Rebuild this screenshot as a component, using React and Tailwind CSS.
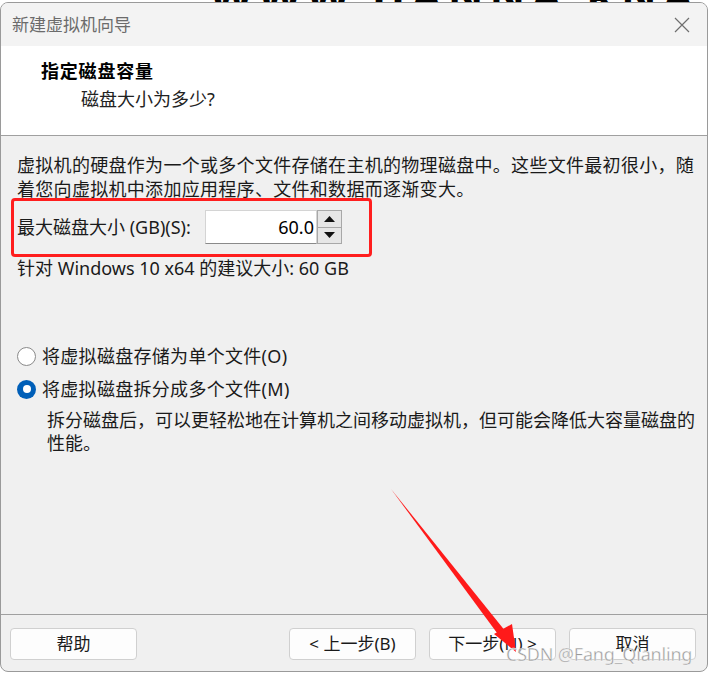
import React from 'react';

const cjk = { fontFamily: '"Noto Sans", "Noto Sans CJK SC", sans-serif' };

function Radio({ checked }) {
  if (checked) {
    return (
      <span className="flex h-[19px] w-[19px] items-center justify-center rounded-full bg-[#005fb8]">
        <span className="h-[8px] w-[8px] rounded-full bg-white" />
      </span>
    );
  }
  return <span className="h-[19px] w-[19px] rounded-full border border-[#8a8a8a] bg-white" />;
}

function Button({ children }) {
  return (
    <button className="flex h-[32px] w-[127px] items-center justify-center rounded-[4px] border border-[#d0d0d0] bg-[#fdfdfd] text-[17px] text-[#1a1a1a]">
      {children}
    </button>
  );
}

export default function App() {
  return (
    <div className="relative h-[673px] w-[711px] overflow-hidden bg-white" style={cjk}>
      {/* page behind the dialog */}
      <div className="absolute left-[210px] top-[-37px] whitespace-nowrap text-[44px] font-bold tracking-[6px] text-black">
        WWW.ПANNA.RNA <span className="text-[#7b3fc4]">♪</span>
      </div>

      <div className="relative mt-[2px] flex h-[670px] w-[708px] flex-col overflow-hidden rounded-[8px] border border-[#9a9a9a] bg-[#f0f0f0]">
        {/* title bar */}
        <div className="flex h-[43px] items-center justify-between bg-[#f3f3f3] pl-[11px] pr-[14px]">
          <span className="text-[17px] text-[#6b6b6b]">新建虚拟机向导</span>
          <svg width="18" height="18" viewBox="0 0 18 18" className="mr-[2px]">
            <path d="M2 2 L16 16 M16 2 L2 16" stroke="#6e6e6e" strokeWidth="1.2" />
          </svg>
        </div>

        {/* header */}
        <div className="h-[90px] border-b border-[#a0a0a0] bg-white pl-[40px] pt-[12px]">
          <div className="text-[18px] font-bold leading-[26px] tracking-[0.8px] text-black">指定磁盘容量</div>
          <div className="ml-[40px] mt-[2px] text-[18px] leading-[26px] text-[#222]">磁盘大小为多少?</div>
        </div>

        {/* body */}
        <div className="flex-1 pl-[16px] pt-[17px] text-[18px] leading-[24px] tracking-[0.3px] text-[#1a1a1a]">
          <p className="whitespace-nowrap">虚拟机的硬盘作为一个或多个文件存储在主机的物理磁盘中。这些文件最初很小，随</p>
          <p>着您向虚拟机中添加应用程序、文件和数据而逐渐变大。</p>

          <div className="relative mt-[9px] flex h-[34px] items-center">
            <span className="w-[188px] tracking-normal">最大磁盘大小 (GB)(S):</span>
            <div className="flex h-[34px] w-[112px] items-center justify-end border border-[#d4d4d4] border-b-[#8a8a8a] bg-white pr-[2px] tracking-normal text-black">
              60.0
            </div>
            <div className="flex h-[34px] w-[25px] flex-col border border-[#a8a8a8] bg-[#e6e6e6]">
              <div className="flex flex-1 items-center justify-center border-b border-[#a8a8a8]">
                <svg width="11" height="6" viewBox="0 0 11 6"><path d="M5.5 0 L11 6 L0 6 Z" fill="#111" /></svg>
              </div>
              <div className="flex flex-1 items-center justify-center">
                <svg width="11" height="6" viewBox="0 0 11 6"><path d="M0 0 L11 0 L5.5 6 Z" fill="#111" /></svg>
              </div>
            </div>
            <div className="absolute left-[-6px] top-[-12px] h-[59px] w-[361px] rounded-[4px] border-[3px] border-[#ff1e1e]" />
          </div>

          <p className="mt-[12px] tracking-normal">针对 Windows 10 x64 的建议大小: 60 GB</p>

          <div className="mt-[64px] flex items-center gap-[6px]">
            <Radio />
            <span>将虚拟磁盘存储为单个文件(O)</span>
          </div>
          <div className="mt-[9px] flex items-center gap-[6px]">
            <Radio checked />
            <span>将虚拟磁盘拆分成多个文件(M)</span>
          </div>
          <div className="ml-[30px] mt-[8px] leading-[23px] tracking-normal">
            <p className="whitespace-nowrap">拆分磁盘后，可以更轻松地在计算机之间移动虚拟机，但可能会降低大容量磁盘的</p>
            <p>性能。</p>
          </div>
        </div>

        {/* footer */}
        <div className="flex h-[57px] items-start border-t border-[#a0a0a0] pl-[9px] pr-[11px] pt-[13px]">
          <Button>帮助</Button>
          <div className="ml-auto flex gap-[13px]">
            <Button>&lt; 上一步(B)</Button>
            <Button>下一步(N) &gt;</Button>
            <Button>取消</Button>
          </div>
        </div>
      </div>

      {/* annotation arrow */}
      <svg className="pointer-events-none absolute left-0 top-0" width="711" height="673" viewBox="0 0 711 673">
        <path d="M391 489 L506 632 L500 637 Z" fill="#ff1a1a" />
        <path d="M516 652 L494 634 L512 624 Z" fill="#ff1a1a" />
      </svg>

      {/* watermark */}
      <div
        className="pointer-events-none absolute left-[506px] top-[641px] whitespace-nowrap text-[18px] tracking-[-0.2px] text-[#9a9a9a]"
        style={{ WebkitTextStroke: '0.4px #ffffff' }}
      >
        CSDN @Fang_Qianling
      </div>
    </div>
  );
}
